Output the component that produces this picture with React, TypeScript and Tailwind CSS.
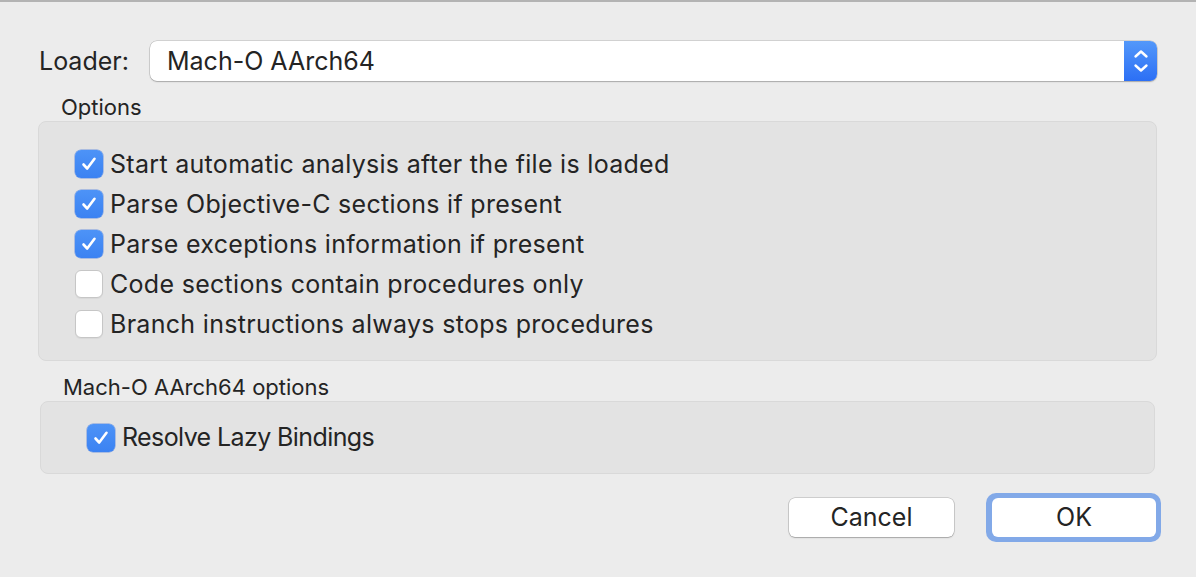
import React from "react";

function Check({ checked }: { checked: boolean }) {
  if (checked) {
    return (
      <div className="w-[28px] h-[28px] rounded-[6px] bg-[linear-gradient(#4d93f7,#3b82f2)] flex items-center justify-center shrink-0 shadow-[0_0_0_0.5px_rgba(40,100,220,0.6)]">
        <svg width="18" height="18" viewBox="0 0 18 18" fill="none">
          <path d="M3.5 9.5 L7.2 13.5 L14.5 3.8" stroke="white" strokeWidth="2.6" strokeLinecap="round" strokeLinejoin="round" />
        </svg>
      </div>
    );
  }
  return (
    <div className="w-[28px] h-[28px] rounded-[6px] bg-white border border-[#c6c6c6] shrink-0 shadow-[0_1px_1px_rgba(0,0,0,0.05)]" />
  );
}

function Row({ checked, label, tight }: { checked: boolean; label: string; tight?: boolean }) {
  return (
    <div className="flex items-center h-[40px] gap-[7px]">
      <Check checked={checked} />
      <span className={tight ? "text-[25px] leading-none tracking-[-0.6px]" : "text-[25px] leading-none tracking-[0.3px]"}>{label}</span>
    </div>
  );
}

export default function App() {
  return (
    <div className="w-[1196px] h-[577px] bg-[#ececec] overflow-hidden text-[#242424] font-['Inter','Liberation_Sans',sans-serif]">
      <div className="h-[2px] bg-[#b3b3b3]" />
      <div className="pl-[39px] pr-[39px] pt-[39px]">
        <div className="flex items-center h-[40px]">
          <span className="w-[111px] text-[25px] leading-none">Loader:</span>
          <div className="flex-1 h-[40px] flex items-stretch bg-white rounded-[7px] shadow-[0_0_0_0.5px_rgba(0,0,0,0.22),0_1px_1.5px_rgba(0,0,0,0.2)] overflow-hidden">
            <div className="flex-1 flex items-center pl-[17px] text-[25px] leading-none">Mach-O AArch64</div>
            <div className="w-[33px] bg-[linear-gradient(#5398fa,#2c6ff5)] flex items-center justify-center">
              <svg width="20" height="30" viewBox="0 0 20 30" fill="none">
                <path d="M4.5 10.5 L10 5.5 L15.5 10.5" stroke="white" strokeWidth="2.4" strokeLinecap="round" strokeLinejoin="round" />
                <path d="M4.5 19.5 L10 24.5 L15.5 19.5" stroke="white" strokeWidth="2.4" strokeLinecap="round" strokeLinejoin="round" />
              </svg>
            </div>
          </div>
        </div>
        <div className="h-[40px] flex items-end pb-[3px] pl-[22px] text-[22px] leading-none">Options</div>
        <div className="-ml-[1px] h-[240px] bg-[#e3e3e3] border border-[#d9d9d9] rounded-[8px] pt-[22px] pl-[36px]">
          <Row checked label="Start automatic analysis after the file is loaded" />
          <Row checked label="Parse Objective-C sections if present" />
          <Row checked label="Parse exceptions information if present" />
          <Row checked={false} label="Code sections contain procedures only" />
          <Row checked={false} label="Branch instructions always stops procedures" />
        </div>
        <div className="h-[40px] flex items-end pb-[3px] pl-[24px] text-[22px] leading-none">Mach-O AArch64 options</div>
        <div className="ml-[1px] mr-[2px] h-[73px] bg-[#e3e3e3] border border-[#d9d9d9] rounded-[8px] pl-[46px] flex items-center">
          <Row checked tight label="Resolve Lazy Bindings" />
        </div>
        <div className="flex justify-end items-center mt-[19px] -mr-[4px]">
          <button className="w-[165px] h-[39px] bg-white rounded-[6px] text-[25px] leading-none shadow-[0_0_0_0.5px_rgba(0,0,0,0.25),0_1px_1.5px_rgba(0,0,0,0.2)]">Cancel</button>
          <div className="ml-[32px] p-[5px] pl-[6px] rounded-[10px] bg-[#82a9e8]">
            <button className="block w-[164px] h-[39px] bg-white rounded-[6px] text-[25px] leading-none">OK</button>
          </div>
        </div>
      </div>
    </div>
  );
}
